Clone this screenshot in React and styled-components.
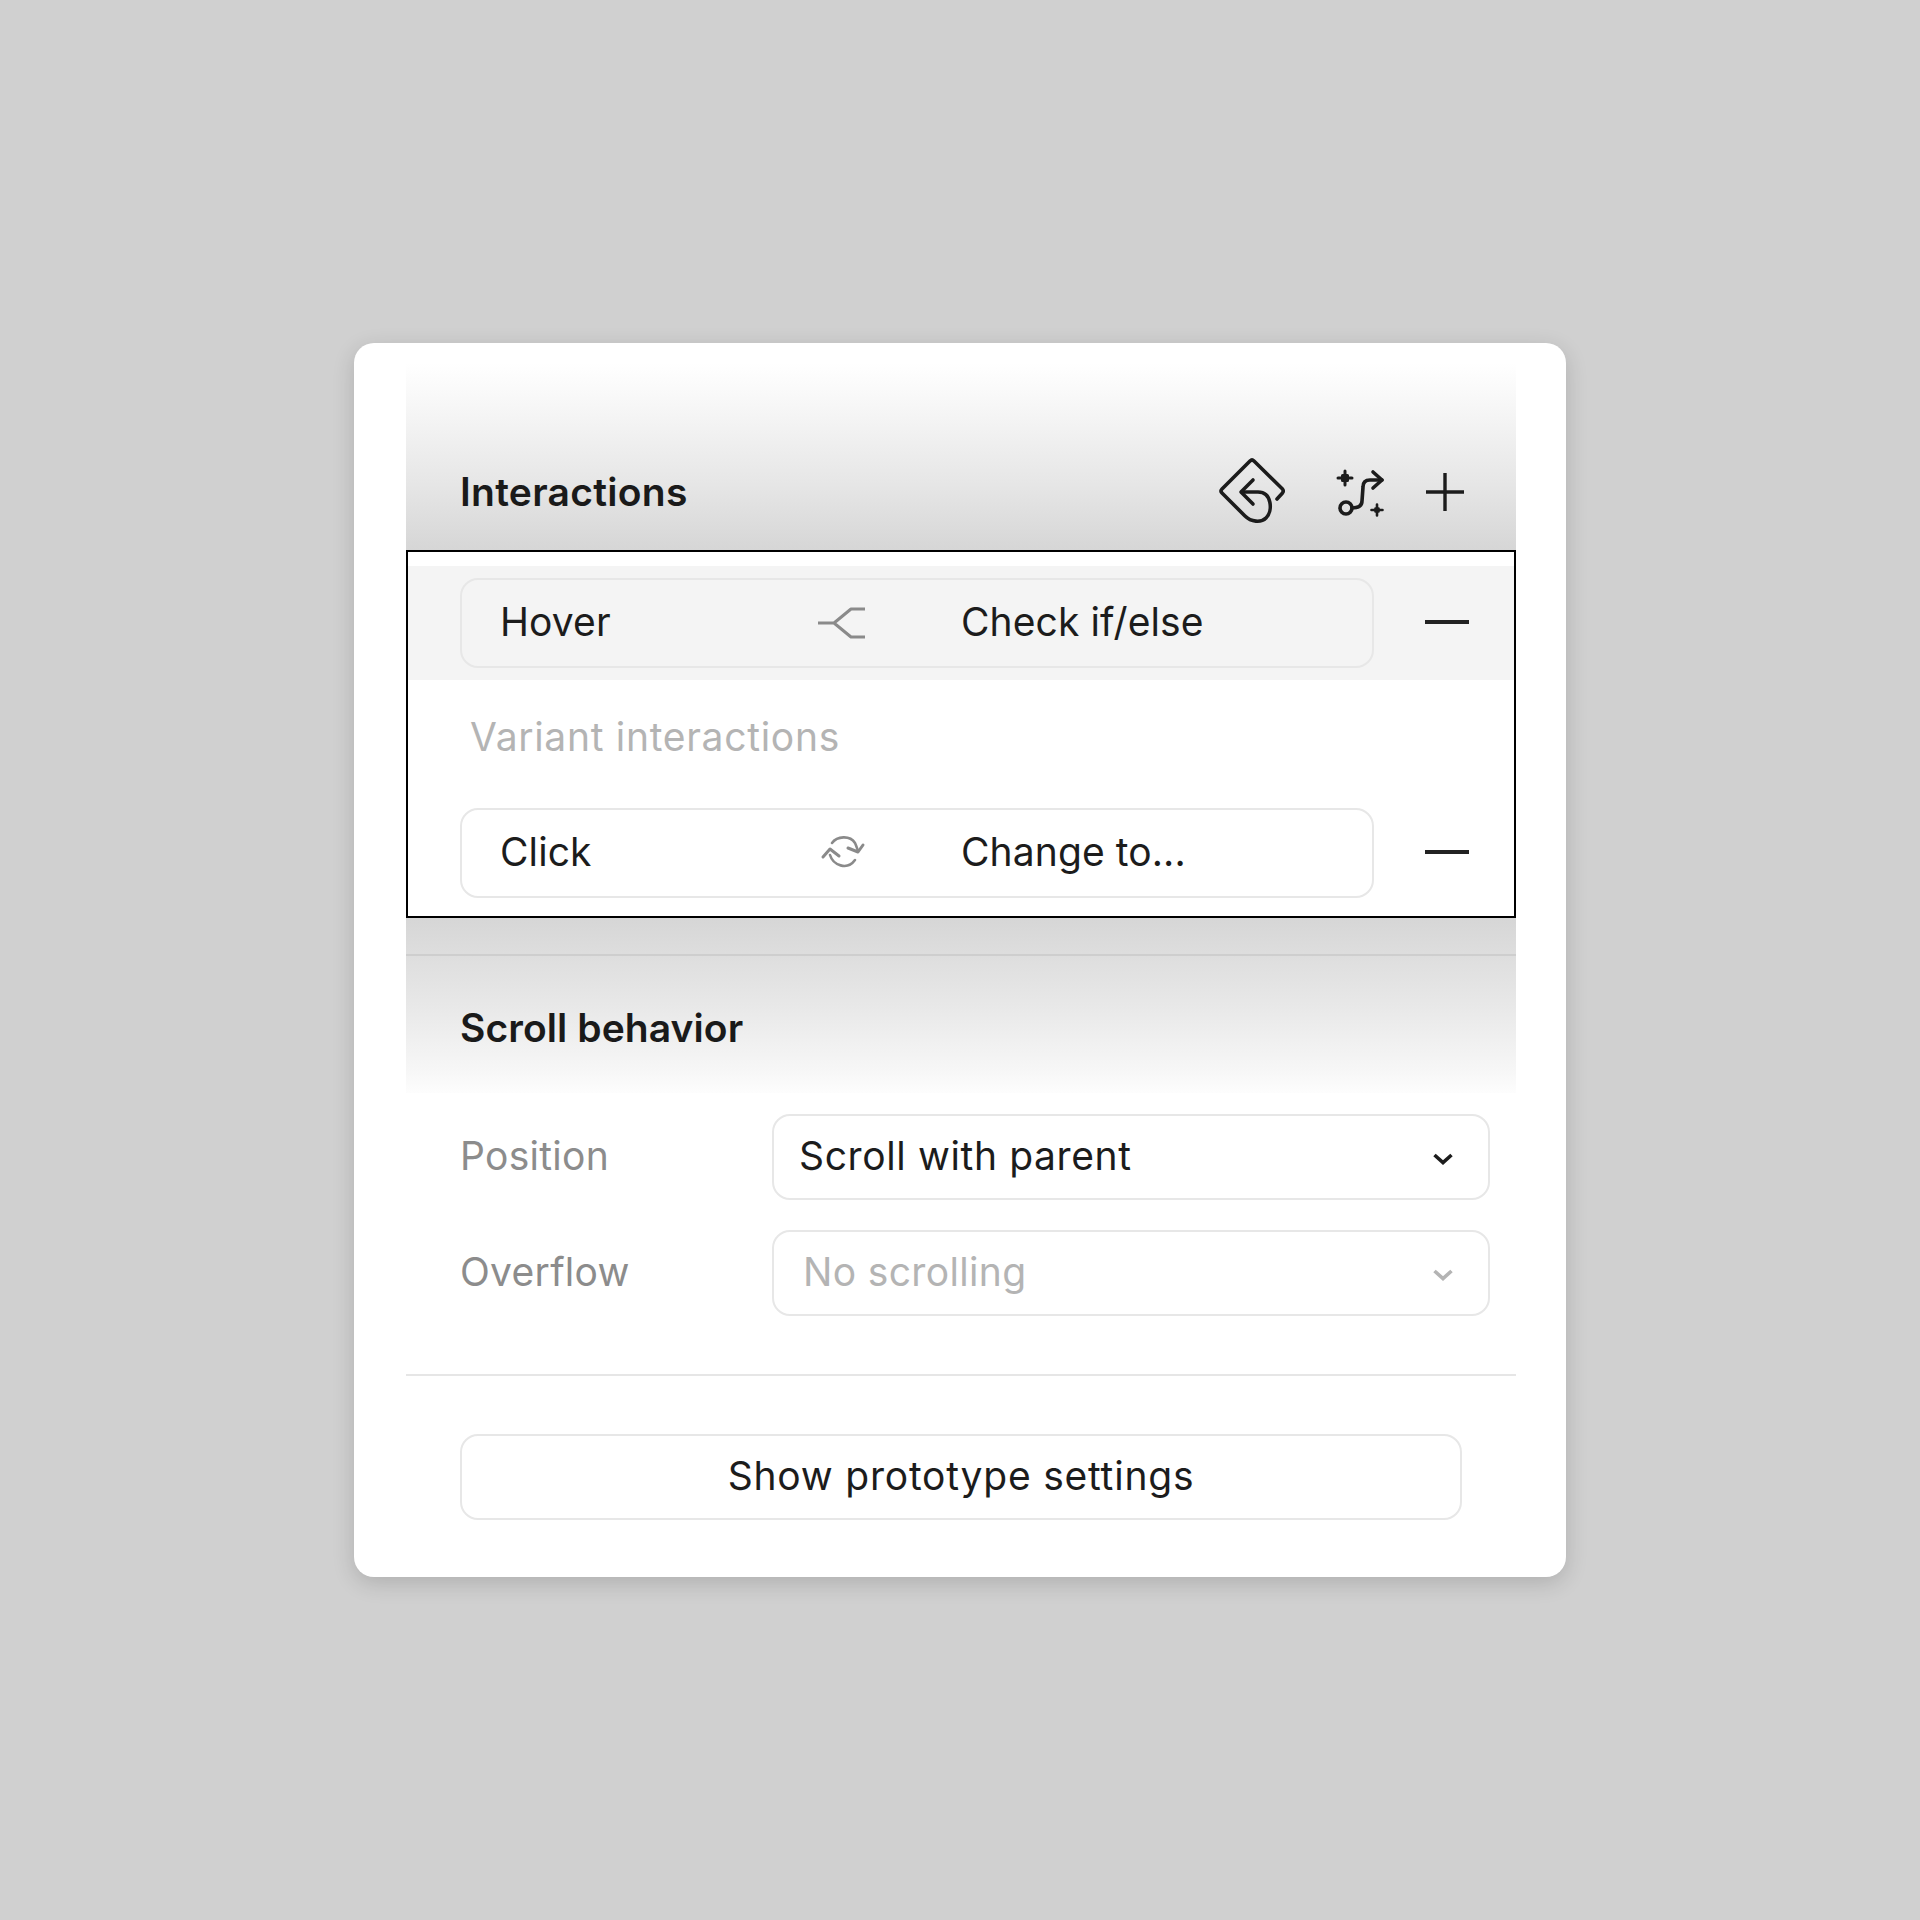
import React from "react";
import styled, { createGlobalStyle } from "styled-components";

const Global = createGlobalStyle`
  html, body { margin: 0; padding: 0; background: #d0d0d0; }
  * { box-sizing: border-box; }
`;

const Stage = styled.main`
  width: 1920px;
  height: 1920px;
  display: flex;
  align-items: center;
  justify-content: center;
  font-family: Inter, "Liberation Sans", sans-serif;
  font-size: 39px;
  font-weight: 400;
  line-height: 46px;
  color: #1c1c1c;
`;

const Card = styled.div`
  width: 1212px;
  height: 1234px;
  padding: 20px 50px 0 52px;
  background: #fff;
  border-radius: 20px;
  box-shadow: 0 6px 22px rgba(0, 0, 0, 0.16);
`;

const InteractionsHeader = styled.header`
  height: 187px;
  padding: 0 50px 35px 54px;
  display: flex;
  align-items: flex-end;
  justify-content: space-between;
  background: linear-gradient(180deg, #fff 0%, #f4f4f4 30%, #e6e6e6 65%, #d6d6d6 100%);
`;

const SectionTitle = styled.h2`
  margin: 0;
  font-size: 39px;
  line-height: 46px;
  font-weight: 600;
  letter-spacing: ${(p) => p.$spacing || "0.27px"};
  color: #1a1a1a;
`;

const HeaderActions = styled.div`
  display: flex;
  align-items: center;
  gap: 38px;
  margin-bottom: -13px;
  height: 72px;
`;

const InteractionBox = styled.section`
  height: 368px;
  border: 2px solid #000;
  background: #fff;
  padding-top: 14px;
`;

const InteractionRow = styled.div`
  height: ${(p) => (p.$active ? "114px" : "90px")};
  padding: ${(p) => (p.$active ? "12px 0 12px 52px" : "0 0 0 52px")};
  display: flex;
  align-items: center;
  background: ${(p) => (p.$active ? "#f4f4f4" : "transparent")};
`;

const Pill = styled.div`
  width: 914px;
  height: 90px;
  border: 2px solid #e7e7e7;
  border-radius: 18px;
  display: grid;
  grid-template-columns: 317px 144px 1fr;
  align-items: center;
  padding-left: 38px;
`;

const PillText = styled.span`
  margin-bottom: 2px;
  letter-spacing: 0.1px;
`;

const ActionIcon = styled.svg`
  display: block;
  fill: none;
  stroke: #8a8a8a;
  stroke-linecap: round;
  stroke-linejoin: round;
`;

const Minus = styled.span`
  display: block;
  width: 44px;
  height: 4px;
  margin: 0 0 2px 51px;
  background: #222;
`;

const GroupLabel = styled.div`
  height: 128px;
  padding: 34px 0 0 62px;
  color: #b4b4b4;
  letter-spacing: 0.7px;
`;

const ScrollHeader = styled.header`
  height: 175px;
  padding: 87px 0 0 54px;
  position: relative;
  background: linear-gradient(180deg, #d6d6d6 0%, #dfdfdf 25%, #e8e8e8 50%, #f7f7f7 88%, #fdfdfd 100%);
`;

const ShadowRule = styled.hr`
  position: absolute;
  top: 36px;
  left: 0;
  right: 0;
  margin: 0;
  border: 0;
  height: 2px;
  background: #cecece;
`;

const Fields = styled.div`
  padding: 21px 0 0 54px;
  display: grid;
  grid-template-columns: 312px 718px;
  row-gap: 30px;
  align-items: center;
`;

const FieldLabel = styled.label`
  margin-bottom: 2px;
  color: #8c8c8c;
  letter-spacing: 0.28px;
`;

const Select = styled.div`
  height: 86px;
  border: 2px solid #e7e7e7;
  border-radius: 18px;
  padding: 0 35px 0 ${(p) => (p.$disabled ? "29px" : "25px")};
  display: flex;
  align-items: center;
  justify-content: space-between;
  color: ${(p) => (p.$disabled ? "#b4b4b4" : "#1c1c1c")};
`;

const SelectText = styled.span`
  margin-bottom: 2px;
  letter-spacing: ${(p) => (p.$disabled ? "0.35px" : "0.62px")};
`;

const Chevron = styled.svg`
  display: block;
  width: 20px;
  height: 12px;
  margin-top: 3px;
  fill: none;
  stroke: ${(p) => (p.$disabled ? "#b4b4b4" : "#1c1c1c")};
  stroke-width: 3.6;
`;

const Rule = styled.hr`
  margin: 58px 0 0;
  border: 0;
  height: 2px;
  background: #e6e6e6;
`;

const Footer = styled.div`
  padding: 58px 0 0 54px;
`;

const SettingsButton = styled.button`
  display: block;
  width: 1002px;
  height: 86px;
  padding: 0 0 3px;
  border: 2px solid #e7e7e7;
  border-radius: 18px;
  background: #fff;
  color: #1c1c1c;
  font: inherit;
  letter-spacing: 0.78px;
  text-align: center;
`;

const ToolIcon = styled.svg`
  display: block;
  fill: none;
  stroke: #1c1c1c;
  stroke-linecap: round;
  stroke-linejoin: round;
`;

const IconReset = () => (
  <ToolIcon width="74" height="72" viewBox="0 0 74 72" strokeWidth="3.6">
    <path d="M61 43 L66.5 37 Q68 35 66.5 33 L38 5 Q36 3 34 5 L6 33 Q4 35 6 37 L29 60 C35 66 45 67 50 62 C57 55 56 36 42 36 L26 36" />
    <path d="M37 24 L25 36 L37 48" />
  </ToolIcon>
);

const IconFlow = () => (
  <ToolIcon width="58" height="54" viewBox="0 0 58 54" strokeWidth="3.6">
    <path d="M17 6 V20 M10 13 H24 M14.5 10.5 H19.5 V15.5 H14.5 Z" fill="#1c1c1c" strokeWidth="3" />
    <path d="M49 39.5 V50.5 M43.5 45 H54.5 M47.5 43.5 H50.5 V46.5 H47.5 Z" fill="#1c1c1c" strokeWidth="2.6" />
    <circle cx="18" cy="43" r="6" />
    <path d="M24 43 C30 43 34 41 34 36 L35 22 C35 17 38 15 42 15 L54 15" />
    <path d="M45 7 L54 15 L45 23" />
  </ToolIcon>
);

const IconPlus = () => (
  <ToolIcon width="42" height="42" viewBox="0 0 42 42" strokeWidth="3.4">
    <path d="M21 2 V40 M2 21 H40" strokeLinecap="butt" />
  </ToolIcon>
);

const IconBranch = () => (
  <ActionIcon width="50" height="36" viewBox="0 0 50 36" strokeWidth="3">
    <path d="M1 18 H17 M48 4 H34 L17 18 L34 32 H48" strokeLinecap="butt" />
  </ActionIcon>
);

const IconSwap = () => (
  <ActionIcon width="50" height="36" viewBox="0 0 50 36" strokeWidth="2.6">
    <path d="M15 8 C20 1 33 0 38 8 C39 10 40 13 41 16" />
    <path d="M31 13 L41 17 L46 10" strokeWidth="3" />
    <path d="M13 20 C16 30 30 36 38 25" />
    <path d="M6 22 L13 14 L22 21" strokeWidth="3" />
  </ActionIcon>
);

const ChevronDown = ({ disabled }) => (
  <Chevron $disabled={disabled} viewBox="0 0 20 12">
    <path d="M1.5 2 L10 9.5 L18.5 2" />
  </Chevron>
);

export default function App() {
  return (
    <Stage>
      <Global />
      <Card>
        <InteractionsHeader>
          <SectionTitle>Interactions</SectionTitle>
          <HeaderActions>
            <IconReset />
            <IconFlow />
            <IconPlus />
          </HeaderActions>
        </InteractionsHeader>
        <InteractionBox>
          <InteractionRow $active>
            <Pill>
              <PillText>Hover</PillText>
              <IconBranch />
              <PillText>Check if/else</PillText>
            </Pill>
            <Minus />
          </InteractionRow>
          <GroupLabel>Variant interactions</GroupLabel>
          <InteractionRow>
            <Pill>
              <PillText>Click</PillText>
              <IconSwap />
              <PillText>Change to...</PillText>
            </Pill>
            <Minus />
          </InteractionRow>
        </InteractionBox>
        <ScrollHeader>
          <ShadowRule />
          <SectionTitle $spacing="0.08px">Scroll behavior</SectionTitle>
        </ScrollHeader>
        <Fields>
          <FieldLabel>Position</FieldLabel>
          <Select>
            <SelectText>Scroll with parent</SelectText>
            <ChevronDown />
          </Select>
          <FieldLabel>Overflow</FieldLabel>
          <Select $disabled>
            <SelectText $disabled>No scrolling</SelectText>
            <ChevronDown disabled />
          </Select>
        </Fields>
        <Rule />
        <Footer>
          <SettingsButton>Show prototype settings</SettingsButton>
        </Footer>
      </Card>
    </Stage>
  );
}
